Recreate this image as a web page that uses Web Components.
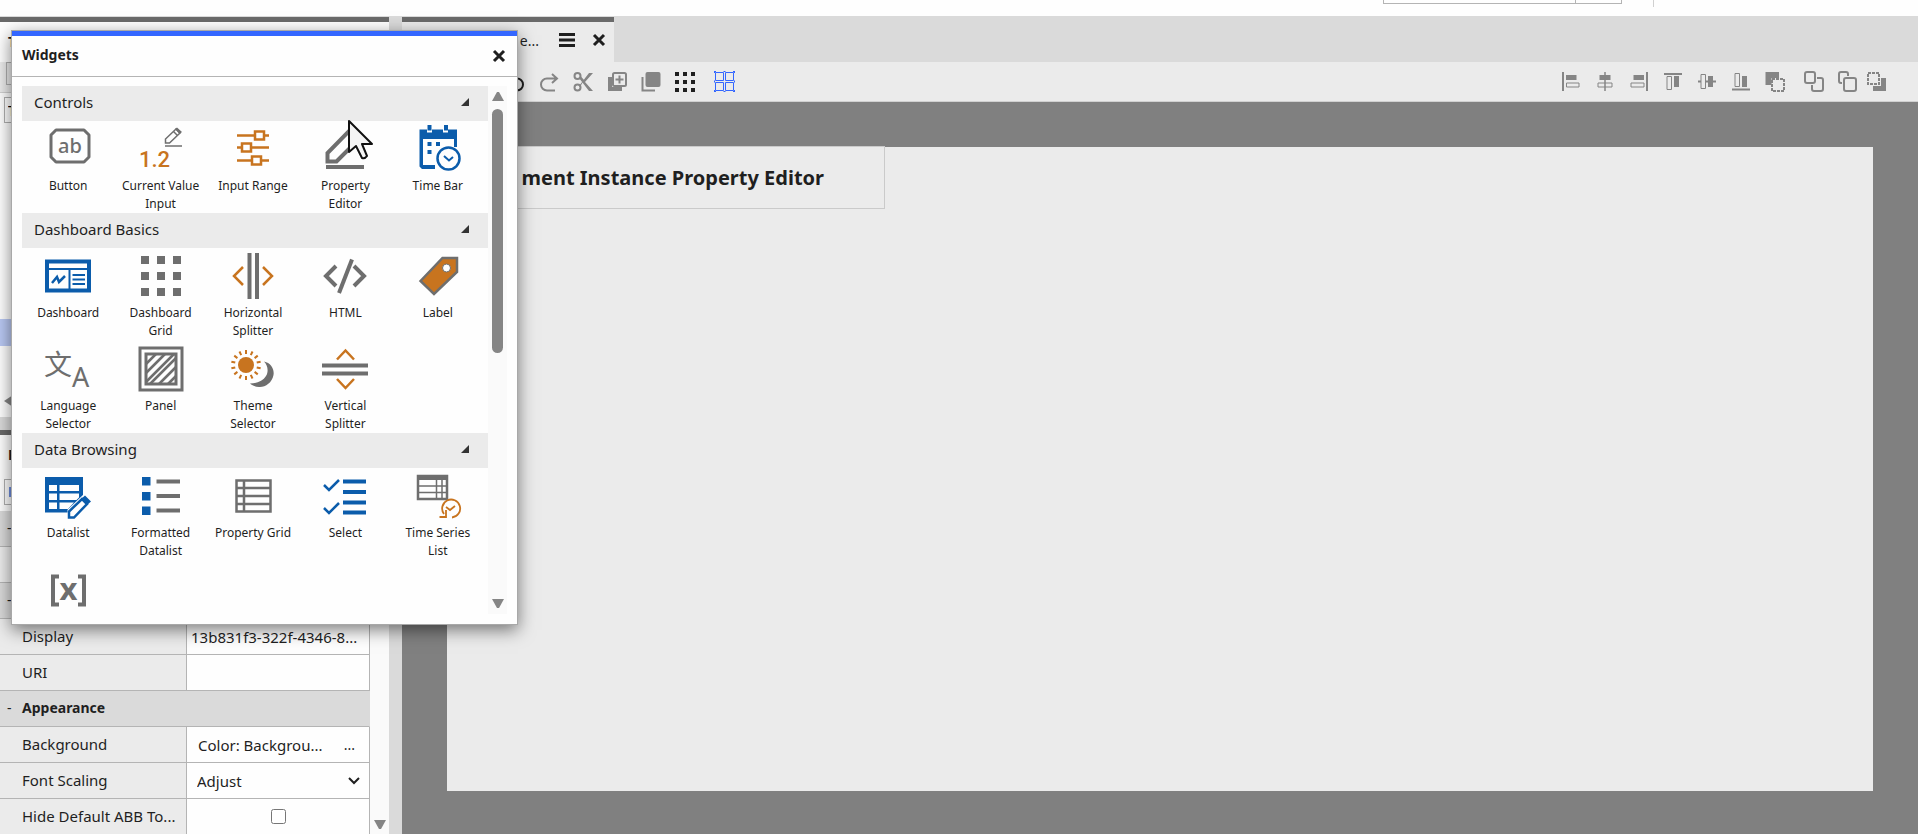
<!DOCTYPE html>
<html lang="en">
<head>
<meta charset="UTF-8">
<meta name="viewport" content="width=device-width, initial-scale=1">
<title>Dashboard Editor</title>
<style>
    body{
        margin:0;
        background-color:#fefefe;
        color:#1f1f1f;
        font-family:"Noto Sans", "Open Sans", sans-serif;
        font-size:14px;
    }
</style>
</head>
<body>

<editor-app>
    <app-header slot="header"></app-header>
    <tree-panel slot="sidebar"></tree-panel>
    <property-panel slot="sidebar"></property-panel>
    <editor-tabs slot="editor"></editor-tabs>
    <editor-toolbar slot="editor"></editor-toolbar>
    <editor-canvas slot="editor">
        <canvas-title>ment Instance Property Editor</canvas-title>
    </editor-canvas>
    <widget-dialog slot="overlay" heading="Widgets">
        <widget-section heading="Controls">
            <widget-tile icon="button">Button</widget-tile>
            <widget-tile icon="value">Current Value Input</widget-tile>
            <widget-tile icon="range">Input Range</widget-tile>
            <widget-tile icon="edit">Property Editor</widget-tile>
            <widget-tile icon="timebar">Time Bar</widget-tile>
        </widget-section>
        <widget-section heading="Dashboard Basics">
            <widget-tile icon="dashboard">Dashboard</widget-tile>
            <widget-tile icon="grid">Dashboard Grid</widget-tile>
            <widget-tile icon="hsplit">Horizontal Splitter</widget-tile>
            <widget-tile icon="html">HTML</widget-tile>
            <widget-tile icon="label">Label</widget-tile>
            <widget-tile icon="language">Language Selector</widget-tile>
            <widget-tile icon="panel">Panel</widget-tile>
            <widget-tile icon="theme">Theme Selector</widget-tile>
            <widget-tile icon="vsplit">Vertical Splitter</widget-tile>
        </widget-section>
        <widget-section heading="Data Browsing">
            <widget-tile icon="datalist">Datalist</widget-tile>
            <widget-tile icon="formatted">Formatted Datalist</widget-tile>
            <widget-tile icon="propgrid">Property Grid</widget-tile>
            <widget-tile icon="select">Select</widget-tile>
            <widget-tile icon="series">Time Series List</widget-tile>
            <widget-tile icon="variable"></widget-tile>
        </widget-section>
    </widget-dialog>
    <mouse-pointer slot="overlay"></mouse-pointer>
</editor-app>

<script>
const GREY = '#6e6e6e';
const BLUE = '#0b5cab';
const ORANGE = '#c8741f';

const squares = (positions, size) => positions.map(y => positions.map(x =>
    `<rect x="${x}" y="${y}" width="${size}" height="${size}"/>`).join('')).join('');

const rays = (cx, cy, count) => Array.from({length: count}, (_, i) =>
    `<path d="M${cx} ${cy - 11}v-4" transform="rotate(${i * 360 / count} ${cx} ${cy})"/>`).join('');

// widget icons, 48 x 48
const widgetIcons = {
    button: `<path d="M12 5h28l5 5v22l-5 5H12l-5-5V10z" fill="none" stroke="${GREY}" stroke-width="3" stroke-linejoin="round"/>
        <text x="26" y="28" text-anchor="middle" font-size="20" font-weight="500" fill="${GREY}">ab</text>`,
    value: `<text x="2" y="42" font-size="22" font-weight="500" font-family="Liberation Sans Narrow, Roboto, sans-serif" fill="${ORANGE}">1.2</text>
        <path d="M28.500 18v-4L39 4l4 4-10.500 10z M36.500 6.500l4 4" fill="none" stroke="${GREY}" stroke-width="1.500"/>
        <path d="M38 4l2-1.500 5 4.500-2.500 2z" fill="${GREY}"/><path d="M28 21h17" stroke="${GREY}" stroke-width="1.500"/>`,
    range: `<g fill="none" stroke="${ORANGE}" stroke-width="2.500"><path d="M8 10.500h18m9 0h5M8 22.500h5m9 0h18M8 35.500h15m9 0h8"/>
        <path d="M26 6.500h9v8h-9zM13 18.500h9v8h-9zM23 31.500h9v8h-9z"/></g>`,
    edit: `<path d="M6.500 36.500V28L29 5l9 9-22.500 22.500z" fill="none" stroke="${GREY}" stroke-width="4"/>
        <path d="M5 42h38" stroke="${GREY}" stroke-width="4"/>`,
    timebar: `<path d="M5.500 4.500h7.500v3h5v-3h11v3h5v-3H43V22h-3v-8H9v26h12v4H8l-2.500-2.500z" fill="${BLUE}"/>
        <path d="M13.500 0h4v5.500h-4zM30 0h4v5.500h-4zM13.500 17h4v4h-4zM22 17h4v4h-4zM13.500 25h4v4h-4z" fill="${BLUE}"/>
        <circle cx="34.500" cy="33.500" r="11" fill="#fefefe" stroke="${BLUE}" stroke-width="2.500"/>
        <path d="M30 31l5 4.500 4-3.500" fill="none" stroke="${BLUE}" stroke-width="2"/>`,
    dashboard: `<g fill="none" stroke="${BLUE}"><path d="M3 9.500h42v29H3z" stroke-width="4"/>
        <path d="M3 17h42M25.500 17v21" stroke-width="2"/><path d="M28.500 23H41M28.500 27.500H41M28.500 32H41" stroke-width="2"/>
        <path d="M8 31l5-6 2 5 6-6" stroke-width="2.500"/></g>`,
    grid: `<g fill="${GREY}">${squares([4, 20, 36], 8)}</g>`,
    hsplit: `<path d="M18.500 1h4v46h-4zM26 1h4v46h-4z" fill="${GREY}"/>
        <path d="M14 15l-9 9 9 9M34 15l9 9-9 9" fill="none" stroke="${ORANGE}" stroke-width="2.500"/>`,
    html: `<g fill="none" stroke="${GREY}" stroke-width="4"><path d="M15 14L5 24l10 10M33 14l10 10-10 10"/><path d="M31 7.500L18 41"/></g>`,
    label: `<path d="M6.500 29L28.500 6H43v14L20 42z" fill="${ORANGE}" stroke="${GREY}" stroke-width="2.500"/>
        <circle cx="32.500" cy="16" r="4" fill="#fefefe" stroke="${GREY}" stroke-width="1"/>`,
    language: `<text x="0" y="30" font-size="28" font-family="Noto Sans CJK SC, sans-serif" fill="${GREY}">文</text>
        <text x="28" y="42" font-size="27" fill="${GREY}">A</text>`,
    panel: `<g fill="none" stroke="${GREY}"><path d="M3 3h42v42H3z" stroke-width="3"/><path d="M9 9h30v30H9z" stroke-width="3"/>
        <path d="M9 19L19 9M9 28L28 9M9 37L37 9M13 39l26-26M22 39l17-17M31 39l8-8" stroke-width="2.500"/></g>`,
    theme: `<circle cx="17" cy="20" r="8" fill="${ORANGE}"/><g stroke="${ORANGE}" stroke-width="2">${rays(17, 20, 14)}</g>
        <path d="M35 16.500C42 18 45.500 24 44.500 30 43 38 36 42.500 30 42 26 41.500 23 40.500 21 38.500 28 38.500 34 36 37 31 40 26 38.500 20 35 16.500z" fill="${GREY}"/>`,
    vsplit: `<path d="M1 18.500h46v4H1zM1 26.500h46v4H1z" fill="${GREY}"/>
        <path d="M16 14.500l8.500-9 8.500 9M16 34l8.500 9 8.500-9" fill="none" stroke="${ORANGE}" stroke-width="2.500"/>`,
    datalist: `<path d="M1 5h38v20L24 40.500H1z" fill="${BLUE}"/>
        <path d="M5 13h8v6H5zM15.500 13H35v6H15.500zM5 21.500h8V28H5zM15.500 21.500H35v4l-2.500 2.500h-17zM5 30.500h8V37H5zM15.500 30.500H30L24 37h-8.500z" fill="#fefefe"/>
        <path d="M25 46v-7.500L41 23l6.500 6.500L32 46z" fill="#fefefe" stroke="#fefefe" stroke-width="3"/>
        <path d="M25 45.500v-6L38 27l5 5-13 13.500z" fill="none" stroke="${BLUE}" stroke-width="2.500"/>
        <path d="M37 27l4-3.500 6 6-4 3.500z" fill="${BLUE}"/>`,
    formatted: `<path d="M5 5h8.500v8.500H5zM5 20h8.500v8.500H5zM5 34.500h8.500V43H5z" fill="${BLUE}"/>
        <path d="M19.500 9.500H43M19.500 24H43M19.500 38.500H43" stroke="${GREY}" stroke-width="4"/>`,
    propgrid: `<path d="M7.500 8.500h34v31h-34zM15 8.500v31M7 16h34M7 24h34M7 32h34" fill="none" stroke="${GREY}" stroke-width="2.500"/>`,
    select: `<g fill="none" stroke="${BLUE}"><path d="M3 13l5 5 10-10M3 36l5 5 10-10" stroke-width="2.500"/>
        <path d="M22 9.500h23M22 20h23M22 30.500h23M22 40.500h23" stroke-width="4"/></g>`,
    series: `<path d="M3 3h31v5H3z" fill="${GREY}"/><path d="M4 4h29v23H4z" fill="none" stroke="${GREY}" stroke-width="2.500"/>
        <path d="M4 14h29M4 20.500h29M22.500 7v20M28 7v20" stroke="${GREY}" stroke-width="1.500"/>
        <path d="M38 45.500a9 9 0 1 0-8-3.500M25.500 45h6.500v-7M32 35l4 3 5-4" fill="none" stroke="${ORANGE}" stroke-width="1.800"/>`,
    variable: `<path d="M15 11.500H9v28h6M34 11.500h6v28h-6" fill="none" stroke="${GREY}" stroke-width="4"/>
        <text x="24.500" y="35" text-anchor="middle" font-size="31" font-weight="bold" fill="${GREY}">x</text>`
};

// toolbar icons, 20 x 20, drawn in the current colour
const toolIcons = {
    undo: `<path d="M7 2L2 6.500 7 11M2 6.500h10a6 6 0 0 1 0 12H3" fill="none" stroke="currentColor" stroke-width="2"/>`,
    redo: `<path d="M13 2l5 4.500-5 4.500M18 6.500H8a6 6 0 0 0 0 12h8" fill="none" stroke="currentColor" stroke-width="2"/>`,
    cut: `<g fill="none" stroke="currentColor" stroke-width="2"><circle cx="4.500" cy="4" r="3"/><circle cx="4.500" cy="15.500" r="3"/></g>
        <path d="M6 14L16 1h4L12 10l8 9h-4L6 6l2-1.500 3 3.500-4 7z" fill="currentColor"/>`,
    add: `<path d="M1 5h4v10h10v4H1z" fill="currentColor"/><rect x="6" y="1" width="13" height="13" rx="1.500" fill="none" stroke="currentColor" stroke-width="2"/>
        <path d="M12.500 3.500v8M8.500 7.500h8" stroke="currentColor" stroke-width="2"/>`,
    copy: `<rect x="4.500" y="0" width="15" height="15" rx="2" fill="currentColor"/><path d="M1.500 5v13.500H14" fill="none" stroke="currentColor" stroke-width="2"/>`,
    dots: `<g fill="currentColor">${squares([0, 8, 16], 4)}</g>`,
    snap: `<path d="M1.500 1.500h8v8h-8zM11.500 1.500h8v8h-8zM1.500 11.500h8v8h-8zM11.500 11.500h8v8h-8z" fill="none" stroke="currentColor"/>
        <path d="M0 0h2v1H1v1H0zM19 0h2v2h-1V1h-1zM0 19h1v1h1v1H0zM20 19h1v2h-2v-1h1zM9.500 0h2v1h-2zM9.500 20h2v1h-2zM0 9.500h1v2H0zM20 9.500h1v2h-1z" fill="currentColor"/>`,
    left: `<path d="M2 0v19" stroke="currentColor" stroke-width="2"/><path d="M5 3h10.500v5H5z" fill="currentColor"/><path d="M5.500 11H18v4H5.500z" fill="none" stroke="currentColor"/>`,
    center: `<path d="M4.500 3h11v5h-11z" fill="currentColor"/><path d="M3 11h14v4H3z" fill="none" stroke="currentColor"/><path d="M10 0v19" stroke="currentColor" stroke-width="1.500"/>`,
    right: `<path d="M18 0v19" stroke="currentColor" stroke-width="2"/><path d="M4.500 3H15v5H4.500z" fill="currentColor"/><path d="M2 11h13v4H2z" fill="none" stroke="currentColor"/>`,
    top: `<path d="M1 2h18" stroke="currentColor" stroke-width="2"/><path d="M11 4h5v11h-5z" fill="currentColor"/><path d="M4 4.500h4.500v13H4z" fill="none" stroke="currentColor"/>`,
    middle: `<path d="M1 9.500h3m5 0h10" stroke="currentColor" stroke-width="2"/><path d="M11 4h5v11h-5z" fill="currentColor"/><path d="M4 2.500h4.500v14H4z" fill="none" stroke="currentColor"/>`,
    bottom: `<path d="M1 17.500h18" stroke="currentColor" stroke-width="2"/><path d="M11 4h5v11h-5z" fill="currentColor"/><path d="M4 1.500h4.500v13H4z" fill="none" stroke="currentColor"/>`,
    front: `<path d="M.500 0h13.500v6H6.500v7h-6z" fill="currentColor"/><path d="M7 7h12v12H7z" fill="none" stroke="currentColor" stroke-width="2" stroke-dasharray="3 1"/>`,
    forward: `<g fill="none" stroke="currentColor" stroke-width="2"><rect x="1" y="0" width="10" height="11" rx="2"/><path d="M13 6h4q2 0 2 2v9q0 2-2 2h-7q-2 0-2-2v-4"/></g>`,
    backward: `<g fill="none" stroke="currentColor" stroke-width="2"><rect x="6" y="6" width="12" height="13" rx="2"/><path d="M4 11H3q-2 0-2-2V2q0-2 2-2h5q2 0 2 2v2"/></g>`,
    back: `<path d="M14 6h5v13H6v-5h8z" fill="currentColor"/><path d="M1 1h11v11H1z" fill="none" stroke="currentColor" stroke-width="2" stroke-dasharray="3 1"/>`,
    menu: `<path d="M2 4.500h16M2 10h16M2 15.500h16" stroke="currentColor" stroke-width="3"/>`,
    close: `<path d="M5 5l10 10M15 5L5 15" stroke="currentColor" stroke-width="3"/>`
};

class UiIcon extends HTMLElement {

    constructor() {
        super();
        this.shadow = this.attachShadow({mode: 'open'});
    }

    connectedCallback() {
        const name = this.getAttribute('name');
        const size = this.hasAttribute('large') ? 48 : (name === 'snap' ? 21 : 20);
        const source = this.hasAttribute('large') ? widgetIcons : toolIcons;

        this.shadow.innerHTML =
        /*html*/
        `
        <style>
            :host{
                display:block;
                flex:none;
            }

            svg{
                display:block;
                overflow:visible;
            }
        </style>
        <svg width="${size}" height="${size}" viewBox="0 0 ${size} ${size}" aria-hidden="true">${source[name]}</svg>
        `;
    }
}

customElements.define('ui-icon', UiIcon);

class EditorApp extends HTMLElement {

    constructor() {
        super();
        this.shadow = this.attachShadow({mode: 'open'});
        this.render();
    }

    render() {
        this.shadow.innerHTML =
        /*html*/
        `
        <style>
            :host{
                display:flex;
                flex-direction:column;
                height:100vh;
                position:relative;
                overflow:hidden;
            }

            main{
                flex:1;
                min-height:0;
                display:grid;
                grid-template-columns:389px 1fr;
                gap:13px;
                padding-top:1px;
                background-color:#dadada;
            }

            .sidebar{
                display:flex;
                flex-direction:column;
                gap:13px;
                min-height:0;
            }

            .editor{
                display:flex;
                flex-direction:column;
                min-width:0;
            }
        </style>
        <slot name="header"></slot>
        <main>
            <div class="sidebar"><slot name="sidebar"></slot></div>
            <div class="editor"><slot name="editor"></slot></div>
        </main>
        <slot name="overlay"></slot>
        `;
    }
}

customElements.define('editor-app', EditorApp);

class AppHeader extends HTMLElement {

    constructor() {
        super();
        this.shadow = this.attachShadow({mode: 'open'});
        this.render();
    }

    render() {
        this.shadow.innerHTML =
        /*html*/
        `
        <style>
            :host{
                display:flex;
                justify-content:flex-end;
                align-items:flex-start;
                height:16px;
                gap:31px;
                padding-right:264px;
            }

            .search{
                display:flex;
                width:239px;
                height:4px;
                box-sizing:border-box;
                border:solid #b4b4b4;
                border-width:0 1px 1px;
            }

            .search div{
                width:191px;
                border-right:solid 1px #b4b4b4;
            }

            .divider{
                width:1px;
                height:7px;
                background-color:#d0d0d0;
            }
        </style>
        <div class="search"><div></div></div>
        <div class="divider"></div>
        `;
    }
}

customElements.define('app-header', AppHeader);

class TreePanel extends HTMLElement {

    constructor() {
        super();
        this.shadow = this.attachShadow({mode: 'open'});
        this.render();
    }

    render() {
        this.shadow.innerHTML =
        /*html*/
        `
        <style>
            :host{
                display:flex;
                flex-direction:column;
                flex:1;
                min-height:0;
                border-top:solid 5px #6a6a6a;
                background-color:#fefefe;
            }

            h2{
                margin:0;
                padding:0 8px;
                font-size:14px;
                line-height:40px;
            }

            .tools{
                height:30px;
                padding-left:6px;
                background-color:#ebebeb;
                border-bottom:solid 1px #d0d0d0;
            }

            .tools div{
                width:200px;
                height:21px;
                border:solid 1px #b0b0b0;
            }

            input{
                display:block;
                box-sizing:border-box;
                width:200px;
                height:26px;
                margin:4px;
                padding:0 3px;
                border:solid 1px #b0b0b0;
                font:inherit;
            }

            .tree{
                flex:1;
                display:flex;
                flex-direction:column;
                justify-content:flex-end;
                padding-bottom:45px;
            }

            .selected{
                height:27px;
                background-color:#b9c8f3;
            }

            .scroll{
                height:26px;
                padding-left:4px;
            }

            .scroll svg{
                display:block;
            }
        </style>
        <h2>T</h2>
        <div class="tools"><div></div></div>
        <input aria-label="Filter" value="T">
        <div class="tree"><div class="selected"></div></div>
        <div class="scroll"><svg width="9" height="20"><path d="M9 4v12L0 10z" fill="#858585"/></svg></div>
        `;
    }
}

customElements.define('tree-panel', TreePanel);

class PropertyPanel extends HTMLElement {

    constructor() {
        super();
        this.shadow = this.attachShadow({mode: 'open'});
        this.render();
    }

    group(name) {
        return `<tr class="group"><th colspan="2"><div><span>-</span>${name}</div></th></tr>`;
    }

    row(id, label, control) {
        return `<tr><th><label for="${id}">${label}</label></th><td><div class="cell">${control}</div></td></tr>`;
    }

    render() {
        this.shadow.innerHTML =
        /*html*/
        `
        <style>
            :host{
                display:block;
                border-top:solid 5px #6a6a6a;
                background-color:#fefefe;
            }

            h2{
                margin:0;
                padding:0 8px;
                font-size:14px;
                line-height:39px;
            }

            .picker{
                display:flex;
                align-items:center;
                box-sizing:border-box;
                width:200px;
                height:26px;
                margin:5px 4px 6px;
                padding:0 4px;
                border:solid 1px #b0b0b0;
            }

            .picker i{
                width:10px;
                height:10px;
                background-color:#6f8fe0;
            }

            .body{
                display:flex;
            }

            table{
                flex:1;
                min-width:0;
                table-layout:fixed;
                border-spacing:0;
                font-size:15px;
            }

            th,
            td{
                box-sizing:border-box;
                height:36px;
                padding:0;
                border:solid #b4b4b4;
                border-width:0 1px 1px 0;
                line-height:20px;
                text-align:left;
                font-weight:normal;
            }

            th{
                padding-bottom:2px;
                background-color:#ebebeb;
            }

            tr:last-child > *{
                height:35px;
                border-bottom:0;
            }

            label{
                display:block;
                padding-left:22px;
                white-space:nowrap;
            }

            .group th{
                background-color:#dadada;
                border-right-color:#dadada;
                font-size:14px;
                font-weight:bold;
            }

            .group div{
                display:flex;
            }

            .group span{
                box-sizing:border-box;
                width:22px;
                padding-left:7px;
                font-weight:normal;
            }

            .cell{
                display:flex;
                align-items:center;
                justify-content:space-between;
                height:35px;
                position:relative;
                white-space:nowrap;
            }

            .cell > span{
                padding-left:11px;
            }

            input,
            select,
            button{
                font:inherit;
                color:inherit;
                border:0;
                background:none;
            }

            input[type=text]{
                width:100%;
                box-sizing:border-box;
                padding:0 4px;
            }

            input[type=checkbox]{
                width:15px;
                height:15px;
                margin:0 auto;
            }

            select{
                appearance:none;
                width:100%;
                padding:0 10px;
            }

            .cell svg{
                position:absolute;
                right:9px;
                pointer-events:none;
            }

            button{
                padding:0 14px;
                font-size:14px;
            }

            .scroll{
                display:flex;
                align-items:flex-end;
                justify-content:center;
                width:19px;
                padding-bottom:5px;
                box-sizing:border-box;
                background-color:#fafafa;
            }
        </style>
        <h2>P</h2>
        <div class="picker"><i></i></div>
        <div class="body">
            <table>
                <colgroup><col style="width:187px"><col></colgroup>
                <tbody>
                ${this.group('')}
                <tr><th></th><td></td></tr>
                ${this.group('')}
                ${this.row('display', 'Display', '<input type="text" id="display" value="13b831f3-322f-4346-8...">')}
                ${this.row('uri', 'URI', '<input type="text" id="uri">')}
                ${this.group('Appearance')}
                ${this.row('background', 'Background', '<span>Color: Backgrou...</span><button type="button" id="background">...</button>')}
                ${this.row('scaling', 'Font Scaling', `<select id="scaling"><option>Adjust</option></select>
                    <svg width="12" height="12"><path d="M1 3l5 5 5-5" fill="none" stroke="#1f1f1f" stroke-width="2"/></svg>`)}
                ${this.row('hide', 'Hide Default ABB To...', '<input type="checkbox" id="hide">')}
                </tbody>
            </table>
            <div class="scroll"><svg width="12" height="9"><path d="M0 0h12L7 9H5z" fill="#858585"/></svg></div>
        </div>
        `;
    }
}

customElements.define('property-panel', PropertyPanel);

class EditorTabs extends HTMLElement {

    constructor() {
        super();
        this.shadow = this.attachShadow({mode: 'open'});
        this.render();
    }

    render() {
        this.shadow.innerHTML =
        /*html*/
        `
        <style>
            :host{
                display:flex;
                background-color:#dadada;
            }

            .tab{
                display:flex;
                align-items:center;
                justify-content:flex-end;
                box-sizing:border-box;
                width:212px;
                height:45px;
                padding:0 5px 4px 0;
                border-top:solid 5px #6a6a6a;
                background-color:#ebebeb;
            }

            .tab span{
                padding-right:18px;
            }

            button{
                padding:0;
                border:0;
                background:none;
                color:inherit;
            }

            .menu{
                margin-right:12px;
            }
        </style>
        <div class="tab">
            <span>e...</span>
            <button class="menu" type="button" aria-label="Menu"><ui-icon name="menu"></ui-icon></button>
            <button type="button" aria-label="Close tab"><ui-icon name="close"></ui-icon></button>
        </div>
        `;
    }
}

customElements.define('editor-tabs', EditorTabs);

class EditorToolbar extends HTMLElement {

    constructor() {
        super();
        this.shadow = this.attachShadow({mode: 'open'});
        this.render();
    }

    tool(name) {
        return `<button type="button" class="${name}" aria-label="${name}"><ui-icon name="${name}"></ui-icon></button>`;
    }

    render() {
        this.shadow.innerHTML =
        /*html*/
        `
        <style>
            :host{
                display:flex;
                justify-content:space-between;
                align-items:center;
                height:39px;
                padding:0 31px 0 103px;
                background-color:#ebebeb;
                border-bottom:solid 1px #d0d0d0;
            }

            div{
                display:flex;
                align-items:center;
                gap:14px;
            }

            .order{
                gap:9px;
            }

            .order .forward{
                margin:0 5px 0 10px;
            }

            button{
                padding:0;
                border:0;
                background:none;
                color:#858585;
            }

            .undo,
            .dots{
                color:#1f1f1f;
            }

            .snap{
                margin-left:5px;
                color:#3366ff;
            }
        </style>
        <div>${['undo', 'redo', 'cut', 'add', 'copy', 'dots', 'snap'].map(this.tool).join('')}</div>
        <div>
            ${['left', 'center', 'right', 'top', 'middle', 'bottom'].map(this.tool).join('')}
            <div class="order">${['front', 'forward', 'backward', 'back'].map(this.tool).join('')}</div>
        </div>
        `;
    }
}

customElements.define('editor-toolbar', EditorToolbar);

class EditorCanvas extends HTMLElement {

    constructor() {
        super();
        this.shadow = this.attachShadow({mode: 'open'});
        this.render();
    }

    render() {
        this.shadow.innerHTML =
        /*html*/
        `
        <style>
            :host{
                display:flex;
                flex:1;
                padding:45px 45px 43px;
                background-color:#808080;
            }

            .page{
                flex:1;
                background-color:#ebebeb;
            }
        </style>
        <div class="page"><slot></slot></div>
        `;
    }
}

customElements.define('editor-canvas', EditorCanvas);

class CanvasTitle extends HTMLElement {

    constructor() {
        super();
        this.shadow = this.attachShadow({mode: 'open'});
        this.render();
    }

    render() {
        this.shadow.innerHTML =
        /*html*/
        `
        <style>
            :host{
                display:block;
                box-sizing:border-box;
                width:438px;
                margin-top:-1px;
                padding-right:60px;
                border:solid 1px #cacaca;
            }

            h1{
                margin:0;
                font-size:20px;
                line-height:61px;
                text-align:right;
                white-space:nowrap;
            }
        </style>
        <h1><slot></slot></h1>
        `;
    }
}

customElements.define('canvas-title', CanvasTitle);

class WidgetDialog extends HTMLElement {

    constructor() {
        super();
        this.shadow = this.attachShadow({mode: 'open'});
        this.render();
    }

    render() {
        this.shadow.innerHTML =
        /*html*/
        `
        <style>
            :host{
                position:absolute;
                left:11px;
                top:30px;
                display:flex;
                flex-direction:column;
                box-sizing:border-box;
                width:507px;
                height:595px;
                border:solid 1px #a8a8a8;
                background-color:#fefefe;
                box-shadow:0 5px 16px rgba(0, 0, 0, 0.5);
            }

            header{
                display:flex;
                align-items:center;
                justify-content:space-between;
                height:40px;
                padding:0 8px 0 10px;
                border-top:solid 5px #3366ff;
                border-bottom:solid 1px #b4b4b4;
            }

            h2{
                margin:0;
                padding-bottom:3px;
                font-size:14px;
            }

            button{
                padding:0;
                border:0;
                background:none;
                color:inherit;
            }

            .body{
                display:flex;
                flex:1;
                min-height:0;
                padding:9px 10px 10px;
            }

            .list{
                flex:1;
                overflow:hidden;
            }

            .scroll{
                display:flex;
                flex-direction:column;
                align-items:center;
                width:19px;
                box-sizing:border-box;
                padding:6px 0;
                background-color:#fafafa;
            }

            .thumb{
                width:11px;
                height:244px;
                margin:8px 0 auto;
                border-radius:6px;
                background-color:#858585;
            }
        </style>
        <header>
            <h2>${this.getAttribute('heading')}</h2>
            <button type="button" aria-label="Close"><ui-icon name="close"></ui-icon></button>
        </header>
        <div class="body">
            <div class="list"><slot></slot></div>
            <div class="scroll">
                <svg width="12" height="9"><path d="M5 0h2l5 9H0z" fill="#858585"/></svg>
                <div class="thumb"></div>
                <svg width="12" height="9"><path d="M0 0h12L7 9H5z" fill="#858585"/></svg>
            </div>
        </div>
        `;
    }
}

customElements.define('widget-dialog', WidgetDialog);

class WidgetSection extends HTMLElement {

    constructor() {
        super();
        this.shadow = this.attachShadow({mode: 'open'});
        this.render();
    }

    render() {
        this.shadow.innerHTML =
        /*html*/
        `
        <style>
            :host{
                display:block;
            }

            h3{
                display:flex;
                align-items:center;
                justify-content:space-between;
                box-sizing:border-box;
                height:35px;
                margin:0;
                padding:0 19px 3px 12px;
                background-color:#ebebeb;
                font-size:15px;
                font-weight:normal;
            }

            .tiles{
                display:grid;
                grid-template-columns:repeat(5, 1fr);
                row-gap:1px;
                padding-right:4px;
            }
        </style>
        <h3>${this.getAttribute('heading')}<svg width="8" height="8"><path d="M8 0v8H0z" fill="#333"/></svg></h3>
        <div class="tiles"><slot></slot></div>
        `;
    }
}

customElements.define('widget-section', WidgetSection);

class WidgetTile extends HTMLElement {

    constructor() {
        super();
        this.shadow = this.attachShadow({mode: 'open'});
        this.render();
    }

    render() {
        this.shadow.innerHTML =
        /*html*/
        `
        <style>
            :host{
                display:block;
            }

            button{
                display:flex;
                flex-direction:column;
                align-items:center;
                gap:4px;
                width:100%;
                height:92px;
                padding:4px 4px 0;
                border:0;
                background:none;
                color:inherit;
                font-family:inherit;
                font-size:12px;
                line-height:18px;
            }
        </style>
        <button type="button"><ui-icon large name="${this.getAttribute('icon')}"></ui-icon><span><slot></slot></span></button>
        `;
    }
}

customElements.define('widget-tile', WidgetTile);

class MousePointer extends HTMLElement {

    constructor() {
        super();
        this.shadow = this.attachShadow({mode: 'open'});
        this.render();
    }

    render() {
        this.shadow.innerHTML =
        /*html*/
        `
        <style>
            :host{
                position:absolute;
                left:347px;
                top:118px;
                pointer-events:none;
            }

            svg{
                display:block;
            }
        </style>
        <svg width="28" height="44"><path d="M2 3v31l7-6 6 12q3 1 5-2l-5-12h10z" fill="#f5f5f5" stroke="#111" stroke-width="2" stroke-linejoin="round"/></svg>
        `;
    }
}

customElements.define('mouse-pointer', MousePointer);
</script>
</body>
</html>
